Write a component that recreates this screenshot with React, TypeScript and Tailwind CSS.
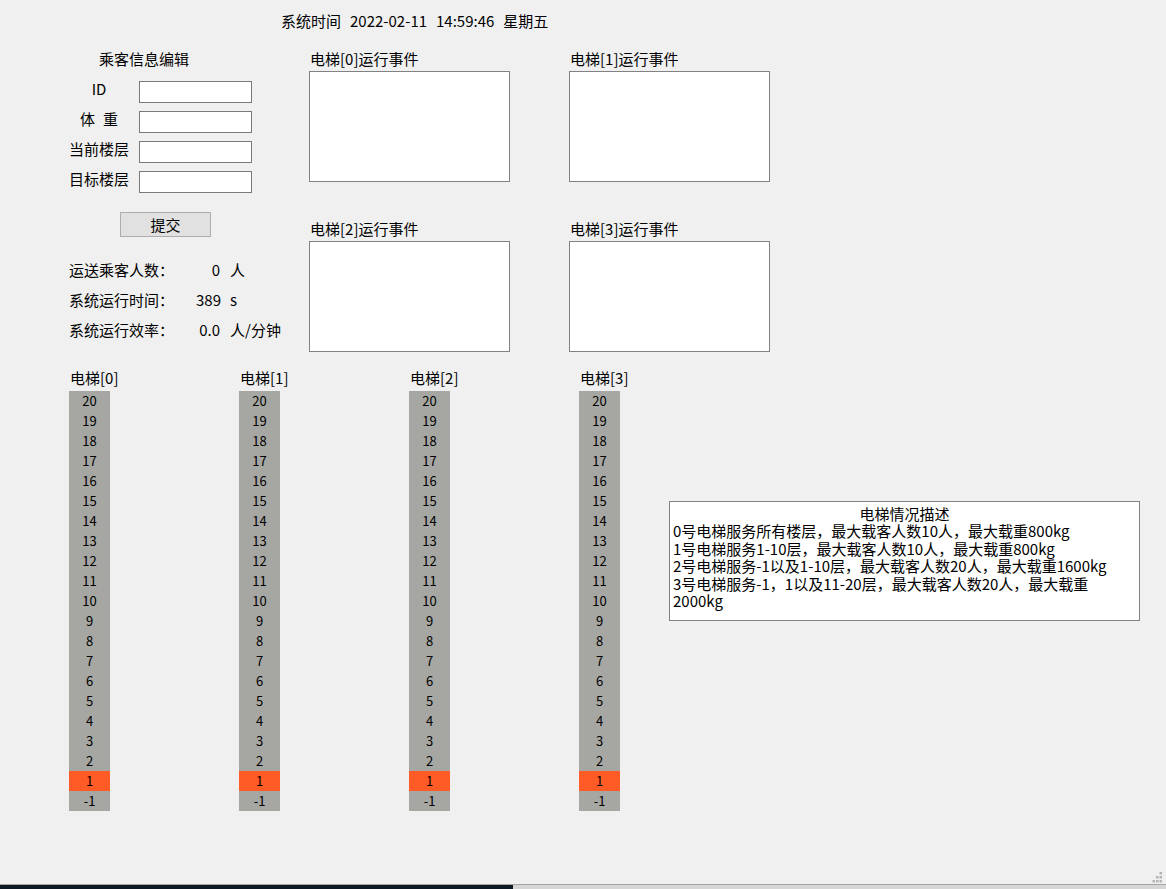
import React from 'react';

const floors = [20, 19, 18, 17, 16, 15, 14, 13, 12, 11, 10, 9, 8, 7, 6, 5, 4, 3, 2, 1, -1];

const formFields = [
    { id: 1, label: 'ID' },
    { id: 2, label: '体 重' },
    { id: 3, label: '当前楼层' },
    { id: 4, label: '目标楼层' },
];

const stats = [
    { id: 1, label: '运送乘客人数：', value: '0', unit: '人' },
    { id: 2, label: '系统运行时间：', value: '389', unit: 's' },
    { id: 3, label: '系统运行效率：', value: '0.0', unit: '人/分钟' },
];

const descLines = [
    '0号电梯服务所有楼层，最大载客人数10人，最大载重800kg',
    '1号电梯服务1-10层，最大载客人数10人，最大载重800kg',
    '2号电梯服务-1以及1-10层，最大载客人数20人，最大载重1600kg',
    '3号电梯服务-1，1以及11-20层，最大载客人数20人，最大载重',
    '2000kg',
];

interface ElevatorProps {
    index: number;
    current: number;
    className?: string;
}

const Elevator: React.FC<ElevatorProps> = ({ index, current, className = '' }) => {
    return (
        <div className={`flex flex-col ${className}`}>
            <div className="pl-[1px] text-[15px] leading-[20px]">电梯[{index}]</div>
            <div className="mt-[3px] w-[41px] bg-[#a6a7a2]">
                {floors.map((f) => (
                    <div
                        key={f}
                        className={`h-[20px] text-center text-[13px] leading-[20px] ${
                            f === current ? 'bg-[#ff5b26]' : ''
                        }`}
                    >
                        {f}
                    </div>
                ))}
            </div>
        </div>
    );
};

const EventBox: React.FC<{ index: number }> = ({ index }) => {
    return (
        <div className="flex flex-col">
            <div className="pl-[1px] text-[15px] leading-[20px]">电梯[{index}]运行事件</div>
            <div className="mt-[2px] h-[111px] w-[201px] border border-[#828282] bg-white" />
        </div>
    );
};

const App: React.FC = () => {
    return (
        <div className="flex h-[889px] w-[1166px] flex-col overflow-hidden bg-[#f0f0f0] font-['Noto_Sans_CJK_SC',sans-serif] text-black">
            {/* System time */}
            <div className="flex gap-[9px] pl-[281px] pt-[11px] text-[15px] leading-[20px]">
                <span>系统时间</span>
                <span>2022-02-11</span>
                <span>14:59:46</span>
                <span>星期五</span>
            </div>

            {/* Passenger form + event logs */}
            <div className="mt-[18px] flex pl-[69px]">
                <div className="flex w-[240px] flex-col text-[15px]">
                    <div className="pl-[30px] leading-[20px]">乘客信息编辑</div>
                    <div className="mt-[12px] flex flex-col gap-[8px]">
                        {formFields.map((field) => (
                            <div key={field.id} className="flex items-start">
                                <div className="flex w-[60px] justify-center gap-[8px] leading-[16px]">
                                    {field.label.split(' ').map((part) => (
                                        <span key={part}>{part}</span>
                                    ))}
                                </div>
                                <input className="ml-[10px] h-[22px] w-[113px] border border-[#7a7a7a] bg-white outline-none" />
                            </div>
                        ))}
                    </div>
                    <button className="ml-[51px] mt-[19px] h-[25px] w-[91px] border border-[#adadad] bg-[#e1e1e1] text-[15px] leading-[20px]">
                        提交
                    </button>
                    <div className="mt-[23px] flex flex-col gap-[10px]">
                        {stats.map((s) => (
                            <div key={s.id} className="flex leading-[20px]">
                                <span className="w-[127px]">{s.label}</span>
                                <span className="w-[24px] text-right">{s.value}</span>
                                <span className="ml-[10px]">{s.unit}</span>
                            </div>
                        ))}
                    </div>
                </div>

                <div className="grid grid-cols-[201px_201px] gap-x-[59px] gap-y-[37px]">
                    {[0, 1, 2, 3].map((i) => (
                        <EventBox key={i} index={i} />
                    ))}
                </div>
            </div>

            {/* Elevator shafts + description */}
            <div className="mt-[16px] flex items-start pl-[69px]">
                <Elevator index={0} current={1} className="w-[170px]" />
                <Elevator index={1} current={1} className="w-[170px]" />
                <Elevator index={2} current={1} className="w-[170px]" />
                <Elevator index={3} current={1} className="w-[90px]" />

                <div className="mt-[133px] h-[120px] w-[471px] border border-[#828282] bg-white px-[3px] pt-[3px] text-[15px] leading-[17.4px]">
                    <div className="text-center">电梯情况描述</div>
                    {descLines.map((line) => (
                        <div key={line} className="whitespace-nowrap">
                            {line}
                        </div>
                    ))}
                </div>
            </div>

            {/* Window bottom edge */}
            <div className="mt-auto flex h-[12px] justify-end pr-[3px]">
                <svg width="11" height="12" viewBox="0 0 11 12">
                    <g fill="#b4b4b4">
                        <rect x="7.5" y="0" width="2.5" height="2.5" />
                        <rect x="4" y="4" width="2.5" height="2.5" />
                        <rect x="7.5" y="4" width="2.5" height="2.5" />
                        <rect x="0.5" y="8" width="2.5" height="2.5" />
                        <rect x="4" y="8" width="2.5" height="2.5" />
                        <rect x="7.5" y="8" width="2.5" height="2.5" />
                    </g>
                </svg>
            </div>
            <div className="h-[1px] bg-[#a4a4a4]" />
            <div className="flex h-[4px]">
                <div className="w-[513px] bg-[#0c1822]" />
                <div className="flex-1 bg-[#d6d6d6]" />
            </div>
        </div>
    );
};

export default App;
